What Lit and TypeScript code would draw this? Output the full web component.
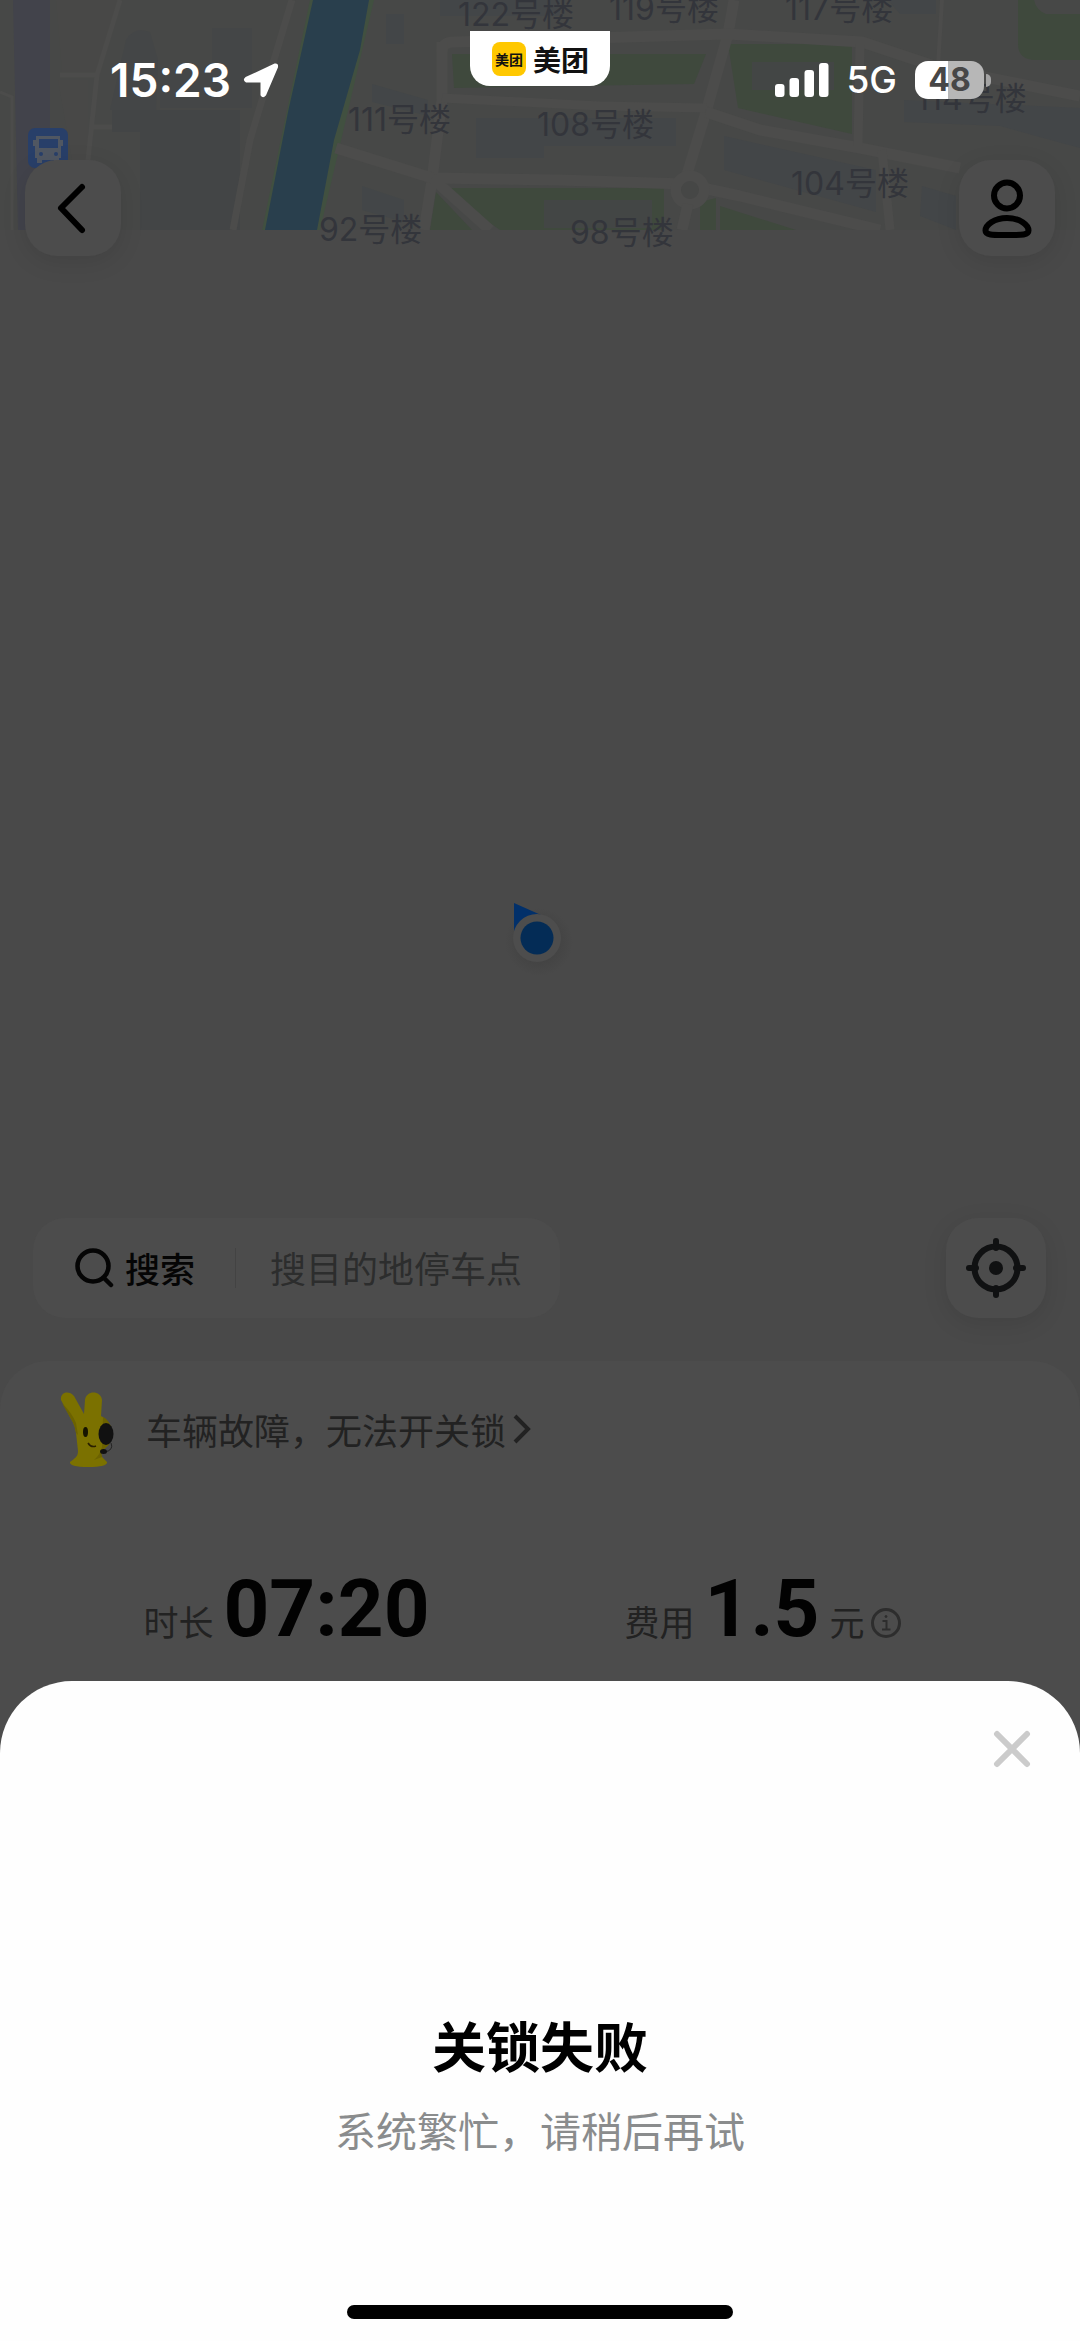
import { LitElement, html, css, svg } from "lit";
import { customElement } from "lit/decorators.js";

interface MapLabel {
  text: string;
  x: number;
  y: number;
}

const MAP_LABELS: MapLabel[] = [
  { text: "122号楼", x: 458, y: 26 },
  { text: "119号楼", x: 609, y: 20 },
  { text: "117号楼", x: 785, y: 20 },
  { text: "111号楼", x: 348, y: 131 },
  { text: "108号楼", x: 537, y: 136 },
  { text: "114号楼", x: 916, y: 110 },
  { text: "104号楼", x: 791, y: 195 },
  { text: "92号楼", x: 319, y: 241 },
  { text: "98号楼", x: 570, y: 244 },
];

/* Map tiles, building names and the rider's position. */
@customElement("ride-map")
export class RideMap extends LitElement {
  static styles = css`
    :host {
      display: block;
      position: absolute;
      inset: 0;
      overflow: hidden;
      background: #494949;
    }
    .tiles {
      display: block;
      width: 100%;
      height: auto;
    }
    .name {
      font: 400 32px Inter, "Noto Sans CJK SC", sans-serif;
      fill: #33353b;
    }
    .marker {
      position: absolute;
      left: 50%;
      top: 938px;
      width: 80px;
      height: 80px;
      transform: translate(-43px, -40px);
    }
  `;

  render() {
    return html`
      <svg class="tiles" viewBox="0 0 1080 260" role="img" aria-label="地图">
        <defs><clipPath id="edge"><rect width="1080" height="230" /></clipPath></defs>
        <g clip-path="url(#edge)">
          <rect width="1080" height="230" fill="#474847" />
          <path d="M13 0H50V230H18Z" fill="#42434b" />
          <path d="M112 110H240V230H140V132H112Z" fill="#434546" />
          <path d="M126 40Q134 26 150 32L158 60L156 110H110ZM212 28H252V108H160V70H212Z" fill="#444647" />
          <path d="M56 0H120L96 72H62ZM58 80H88V160H72Z" fill="#484847" />
          <g fill="none" stroke="#4c4c4b" stroke-width="7">
            <path d="M120 0L97 75L88 160V230M60 75H98M90 127H112" stroke-width="5" />
            <path d="M292 0L250 140L233 230" />
            <path d="M0 92L12 97V230" stroke-width="3" />
          </g>
          <path d="M310 0L262 230H320L374 0Z" fill="#415040" />
          <path d="M313 0L288 112L265 230H317L334 140L360 50L369 0Z" fill="#293f4d" />
          <g fill="#434648">
            <path d="M386 14H404V44H386ZM440 0H560V16H440ZM372 84L428 100V116L372 102Z" />
            <path d="M476 118H676V146H544V158H476ZM362 186L404 200V222L362 210Z" />
            <path d="M888 0H936V14H900ZM904 100L1080 108V148L1000 126L904 122Z" />
            <path d="M724 136L876 170V212L724 170ZM922 186L956 196V230L920 216Z" />
          </g>
          <path d="M452 54H706L694 84L454 88Z" fill="#3f493d" />
          <path d="M728 44H852V134L738 108Z" fill="#3f493d" />
          <path d="M440 188H664V230H500Z" fill="#3f493d" />
          <path d="M436 192L472 230H430ZM700 202L716 198V230H700ZM720 206L796 230H720Z" fill="#3f493d" />
          <path d="M1018 0H1034Q1036 10 1046 14H1080V60H1036Q1018 60 1018 44Z" fill="#3f493d" />
          <path d="M544 200H652V228H544ZM752 62H834V90H752Z" fill="#434645" />
          <g fill="none" stroke="#4c4c4b" stroke-width="11" stroke-linejoin="round">
            <path d="M734 0L728 34L706 112L684 184" />
            <path d="M442 52Q442 42 454 42L728 34L862 42L940 68L1080 96" />
            <path d="M442 42V100L432 180L424 230" />
            <path d="M442 98L600 106L706 108" stroke-width="9" />
            <path d="M336 148L432 178L560 180L684 184L740 196L880 230" />
            <path d="M432 178L490 230" />
            <path d="M706 112L760 130L860 148L960 168" />
            <path d="M860 44L858 146M882 150L890 230" stroke-width="9" />
            <path d="M942 0L938 66" stroke-width="4" />
            <circle cx="690" cy="190" r="14" />
            <path d="M688 204L682 230" />
          </g>
          <circle cx="690" cy="190" r="9" fill="#464746" />
        </g>
        <g>
          <rect x="28" y="128" width="40" height="40" rx="7" fill="#283f69" />
          <path d="M36 136H60V140H63V146H61V158H59V163H54V160H42V163H37V158H35V146H33V140H36Z" fill="#505762" />
          <rect x="39" y="139" width="19" height="9" fill="#283f69" />
          <circle cx="41" cy="154" r="2" fill="#283f69" /><circle cx="56" cy="154" r="2" fill="#283f69" />
        </g>
        ${MAP_LABELS.map((l) => svg`<text class="name" x=${l.x} y=${l.y}>${l.text}</text>`)}
      </svg>
      <svg class="marker" viewBox="0 0 80 80" role="img" aria-label="当前位置">
        <defs>
          <radialGradient id="halo">
            <stop offset="0.6" stop-color="#444444" /><stop offset="1" stop-color="#494949" />
          </radialGradient>
        </defs>
        <circle cx="42" cy="44" r="34" fill="url(#halo)" />
        <path d="M17 5L44 17L17 33Z" fill="#02306a" />
        <circle cx="40" cy="40" r="24" fill="#4d4d4d" />
        <circle cx="40" cy="40" r="16.500" fill="#042c56" />
      </svg>
    `;
  }
}

/* Clock, owning app, signal and battery. */
@customElement("status-bar")
export class StatusBar extends LitElement {
  static styles = css`
    :host {
      display: grid;
      grid-template-columns: 1fr auto 1fr;
      align-items: center;
      height: 160px;
      color: #fff;
      font-family: Inter, "Noto Sans CJK SC", sans-serif;
    }
    .left,
    .right,
    .app {
      display: flex;
      align-items: center;
    }
    .left {
      gap: 12px;
      padding-left: 110px;
    }
    .time {
      font-size: 46px;
      line-height: 56px;
      font-weight: 600;
    }
    .arrow {
      width: 36px;
      height: 36px;
    }
    .app {
      align-self: start;
      gap: 7px;
      height: 55px;
      margin-top: 31px;
      padding: 0 21px 0 22px;
      box-sizing: border-box;
      border-radius: 0 0 20px 20px;
      background: #fff;
      color: #111;
      font-size: 28px;
      font-weight: 700;
    }
    .logo {
      display: grid;
      place-items: center;
      width: 34px;
      height: 34px;
      border-radius: 8px;
      background: #ffc800;
      font-size: 14px;
    }
    .right {
      justify-content: flex-end;
      padding-right: 89px;
    }
    .signal {
      width: 54px;
      height: 34px;
    }
    .net {
      margin: 0 18px 0 17px;
      font-size: 37px;
      line-height: 44px;
      font-weight: 500;
    }
    .battery {
      display: grid;
      place-items: center;
      width: 69px;
      height: 38px;
      border-radius: 13px;
      background: linear-gradient(90deg, #fff 48%, #b7b7b7 48%);
      color: #474747;
      font-size: 32px;
      line-height: 38px;
      font-weight: 700;
    }
    .nub {
      width: 5px;
      height: 13px;
      margin-left: 2px;
      border-radius: 0 6px 6px 0;
      background: #a4a4a4;
    }
  `;

  render() {
    return html`
      <div class="left">
        <span class="time">15:23</span>
        <svg class="arrow" viewBox="0 0 36 36" aria-hidden="true">
          <path d="M3 16L32 2.500Q34.500 2 34 5L22 33Q20 35.500 18.500 33V19.500H3.500Q0.500 18 3 16Z" fill="#fff" stroke="#fff" stroke-width="2" stroke-linejoin="round" />
        </svg>
      </div>
      <div class="app"><span class="logo">美团</span><span>美团</span></div>
      <div class="right">
        <svg class="signal" viewBox="0 0 54 34" fill="#fff" aria-hidden="true">
          <rect x="0" y="21" width="9.500" height="13" rx="3" />
          <rect x="14.500" y="15" width="9.500" height="19" rx="3" />
          <rect x="29.500" y="7" width="9.500" height="27" rx="3" />
          <rect x="44" y="0" width="9.500" height="34" rx="3" />
        </svg>
        <span class="net">5G</span>
        <span class="battery">48</span><span class="nub"></span>
      </div>
    `;
  }
}

/* Ride details: help entry, duration and price. */
@customElement("ride-panel")
export class RidePanel extends LitElement {
  static styles = css`
    :host {
      display: block;
      padding: 22px 0 82px;
      border-radius: 48px 48px 0 0;
      background: #4c4c4c;
      color: #222;
      font-family: "Noto Sans CJK SC", sans-serif;
    }
    .help {
      display: flex;
      align-items: center;
      height: 92px;
      padding-left: 58px;
      color: #222;
      font-size: 36px;
      line-height: 48px;
      text-decoration: none;
    }
    .mascot {
      width: 60px;
      height: 80px;
      margin-right: 28px;
    }
    .more {
      width: 20px;
      height: 32px;
      margin-left: 6px;
    }
    .stats {
      display: grid;
      grid-template-columns: 1fr 1fr;
      margin: 84px 82px 0 56px;
    }
    .stat {
      display: flex;
      justify-content: center;
      align-items: baseline;
      font-size: 35px;
      line-height: 100px;
    }
    .value {
      margin: 0 10px;
      color: #020202;
      font-family: Roboto, sans-serif;
      font-size: 80px;
      font-weight: 700;
    }
    .info {
      width: 30px;
      height: 30px;
      margin-left: 6px;
      padding: 0;
      border: 0;
      background: none;
      transform: translateY(2px);
    }
    .info svg {
      display: block;
    }
  `;

  render() {
    return html`
      <a class="help" href="#help">
        <svg class="mascot" viewBox="0 0 60 80" aria-hidden="true">
          <path d="M3 11C2 3 11 1 16 7L26 25L27 11C28 1 43 1 44 11L43 27C51 31 55 39 54 47C53 55 48 59 43 62C42 67 45 69 49 73C50 76 43 78 30 78C18 78 11 76 12 73C17 69 20 68 20 62L18 44Q17 36 13 30Z" fill="#7b7100" />
          <path d="M4 14Q14 24 18 34L20 46L18 44Q17 36 13 30ZM45 28C51 31 55 39 54 47C53 55 48 59 43 62L44 68L36 71Q42 66 44 58Z" fill="#6c6200" />
          <ellipse cx="27.500" cy="43" rx="2.500" ry="5" fill="#161400" />
          <ellipse cx="48" cy="45" rx="7.500" ry="11" fill="#111" />
          <path d="M30 54Q33 59 38 57" fill="none" stroke="#2a2000" stroke-width="1.500" />
          <path d="M53 54Q56 61 47 63" fill="none" stroke="#222" stroke-width="1" />
          <ellipse cx="45.500" cy="62.500" rx="3.500" ry="2.500" fill="#111" />
        </svg>
        <span>车辆故障，无法开关锁</span>
        <svg class="more" viewBox="0 0 20 32" fill="none" stroke="#222" stroke-width="4" aria-hidden="true">
          <path d="M3 3L16 16L3 29" />
        </svg>
      </a>
      <div class="stats">
        <div class="stat"><span>时长</span><span class="value">07:20</span></div>
        <div class="stat">
          <span>费用</span><span class="value">1.5</span><span>元</span>
          <button class="info" type="button" aria-label="费用说明">
            <svg viewBox="0 0 30 30" fill="none" stroke="#2d2d2d" stroke-width="3">
              <circle cx="15" cy="15" r="13.500" />
              <path d="M11.500 13H15.500V21.500M11 21.500H19.500" stroke-width="2" />
              <circle cx="15" cy="8.500" r="1" fill="#2d2d2d" stroke-width="1" />
            </svg>
          </button>
        </div>
      </div>
    `;
  }
}

/* Bottom sheet that reports the failed lock. */
@customElement("result-sheet")
export class ResultSheet extends LitElement {
  static styles = css`
    :host {
      display: flex;
      flex-direction: column;
      align-items: center;
      position: relative;
      margin-top: -72px;
      padding: 44px 44px 22px;
      border-radius: 72px 72px 0 0;
      background: #fefefe;
      font-family: "Noto Sans CJK SC", sans-serif;
    }
    .close {
      align-self: flex-end;
      width: 48px;
      height: 48px;
      padding: 0;
      border: 0;
      background: none;
    }
    .title {
      margin: 236px 0 0;
      color: #000;
      font-size: 54px;
      line-height: 72px;
      font-weight: 700;
    }
    .text {
      margin: 20px 0 0;
      color: #8a8c8d;
      font-size: 41px;
      line-height: 56px;
    }
    .home {
      width: 386px;
      height: 14px;
      margin-top: 148px;
      border-radius: 7px;
      background: #000;
    }
  `;

  render() {
    return html`
      <button class="close" type="button" aria-label="关闭">
        <svg viewBox="0 0 48 48" fill="none" stroke="#cbcbcb" stroke-width="6" stroke-linecap="round">
          <path d="M9 9L39 39M39 9L9 39" />
        </svg>
      </button>
      <h1 class="title">关锁失败</h1>
      <p class="text">系统繁忙，请稍后再试</p>
      <div class="home"></div>
    `;
  }
}

@customElement("app-root")
export class AppRoot extends LitElement {
  static styles = css`
    :host {
      display: flex;
      flex-direction: column;
      position: relative;
      min-height: 100vh;
      overflow: hidden;
      background: #494949;
      font-family: "Noto Sans CJK SC", sans-serif;
    }
    .top,
    .tools,
    .search,
    .go {
      display: flex;
      align-items: center;
    }
    .stage {
      display: flex;
      flex-direction: column;
      flex: 1;
    }
    status-bar,
    .top,
    .tools,
    ride-panel {
      position: relative;
    }
    .top {
      justify-content: space-between;
      padding: 0 25px;
    }
    .tile {
      display: grid;
      place-items: center;
      width: 96px;
      height: 96px;
      padding: 0;
      border: 0;
      border-radius: 32px;
      background: #4c4c4c;
      box-shadow: 0 6px 24px rgba(0, 0, 0, 0.1);
    }
    .tools {
      justify-content: space-between;
      margin-top: auto;
      padding: 0 34px 43px 33px;
    }
    .large {
      width: 100px;
      height: 100px;
    }
    .search {
      flex: 0 1 527px;
      min-width: 0;
      height: 100px;
      border-radius: 32px;
      background: #4c4c4c;
    }
    .go {
      flex: none;
      gap: 10px;
      height: 40px;
      padding: 0 40px 0 42px;
      border: 0;
      border-right: 1px solid #434343;
      background: none;
      color: #050505;
      font: 500 35px/40px "Noto Sans CJK SC", sans-serif;
    }
    .field {
      flex: 1;
      width: 0;
      min-width: 0;
      height: 48px;
      padding: 0 0 2px 34px;
      border: 0;
      outline: 0;
      background: none;
      font: 400 36px/48px "Noto Sans CJK SC", sans-serif;
    }
    .field::placeholder {
      color: #2c2d2d;
      opacity: 1;
    }
  `;

  render() {
    return html`
      <ride-map></ride-map>
      <main class="stage">
        <status-bar></status-bar>
        <nav class="top">
          <button class="tile" type="button" aria-label="返回">
            <svg width="96" height="96" viewBox="0 0 96 96" fill="none" stroke="#000" stroke-width="6" stroke-linecap="round" stroke-linejoin="round">
              <path d="M57 27L36 48L57 70" />
            </svg>
          </button>
          <button class="tile" type="button" aria-label="我的">
            <svg width="96" height="96" viewBox="0 0 96 96" fill="none" stroke="#000" stroke-width="6">
              <circle cx="48" cy="35.500" r="13" />
              <path d="M48 58C35 58 26.500 65 26.500 70.500C26.500 75.500 35 75 48 75C61 75 69.500 75.500 69.500 70.500C69.500 65 61 58 48 58Z" />
            </svg>
          </button>
        </nav>
        <div class="tools">
          <form class="search" role="search">
            <button class="go" type="button">
              <svg width="40" height="40" viewBox="0 0 40 40" fill="none" stroke="#050505" stroke-width="4.500" stroke-linecap="round" aria-hidden="true">
                <circle cx="18" cy="18" r="15.500" />
                <path d="M29 30L36 37" />
              </svg>
              搜索
            </button>
            <input class="field" type="text" aria-label="目的地停车点" placeholder="搜目的地停车点" />
          </form>
          <button class="tile large" type="button" aria-label="定位">
            <svg width="64" height="64" viewBox="0 0 64 64" fill="none" stroke="#101112" stroke-width="6" stroke-linecap="round">
              <circle cx="32" cy="32" r="21.500" />
              <path d="M32 5V12M32 52V59M5 32H12M52 32H59" />
              <circle cx="32" cy="32" r="7" fill="#101112" stroke="none" />
            </svg>
          </button>
        </div>
        <ride-panel></ride-panel>
      </main>
      <result-sheet role="dialog" aria-label="关锁失败"></result-sheet>
    `;
  }
}
